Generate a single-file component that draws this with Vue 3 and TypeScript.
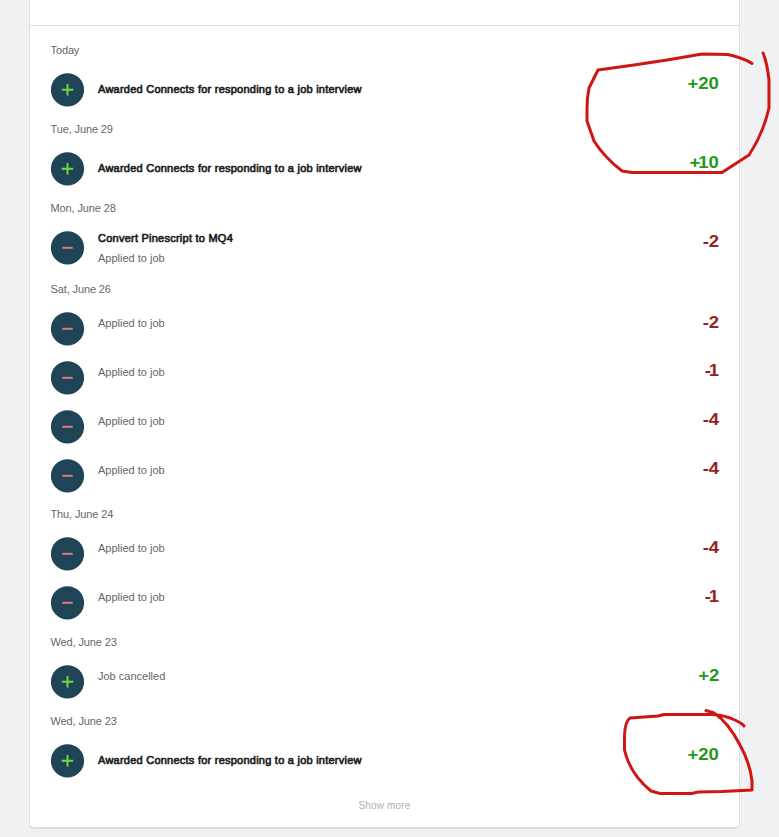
<script setup lang="ts">
interface Entry {
  title?: string
  note?: string
  amount: number
}

interface Group {
  date: string
  entries: Entry[]
}

const awarded = 'Awarded Connects for responding to a job interview'
const applied = 'Applied to job'

const groups: Group[] = [
  { date: 'Today', entries: [{ title: awarded, amount: 20 }] },
  { date: 'Tue, June 29', entries: [{ title: awarded, amount: 10 }] },
  { date: 'Mon, June 28', entries: [{ title: 'Convert Pinescript to MQ4', note: applied, amount: -2 }] },
  {
    date: 'Sat, June 26',
    entries: [
      { note: applied, amount: -2 },
      { note: applied, amount: -1 },
      { note: applied, amount: -4 },
      { note: applied, amount: -4 },
    ],
  },
  {
    date: 'Thu, June 24',
    entries: [
      { note: applied, amount: -4 },
      { note: applied, amount: -1 },
    ],
  },
  { date: 'Wed, June 23', entries: [{ note: 'Job cancelled', amount: 2 }] },
  { date: 'Wed, June 23', entries: [{ title: awarded, amount: 20 }] },
]

const signed = (n: number): string => (n > 0 ? `+${n}` : `${n}`)
</script>

<template>
  <main class="page">
    <section class="card">
      <header class="card-head"></header>
      <div class="history">
        <section v-for="(group, g) in groups" :key="g" class="group">
          <h2 class="date">{{ group.date }}</h2>
          <article
            v-for="(entry, e) in group.entries"
            :key="e"
            class="entry"
            :class="{ 'entry-double': entry.title && entry.note }"
          >
            <svg class="badge" viewBox="0 0 34 34" aria-hidden="true">
              <circle cx="16.5" cy="16.8" r="16.6" fill="#1f4456" />
              <path v-if="entry.amount > 0" d="M10.700 16.800H22.300M16.500 11V22.600" stroke="#6fda44" stroke-width="1.900" />
              <path v-else d="M11.300 16.800H21.700" stroke="#d97c7c" stroke-width="2" />
            </svg>
            <div class="text" :class="{ 'text-single': entry.title && !entry.note }">
              <p v-if="entry.title" class="title">{{ entry.title }}</p>
              <p v-if="entry.note" class="note">{{ entry.note }}</p>
            </div>
            <strong
              class="amount"
              :class="[entry.amount > 0 ? 'gain' : 'spend', { narrow: signed(entry.amount).includes('1') }]"
            ><span class="sign">{{ signed(entry.amount).charAt(0) }}</span>{{ Math.abs(entry.amount) }}</strong>
          </article>
        </section>
      </div>
      <footer class="more">Show more</footer>
    </section>

    <svg class="marks" viewBox="0 0 779 837" aria-hidden="true">
      <path d="M752 63.5Q745 58.5 728 54.5L702 54L667 60L634 65L598 70L589 88Q587 98 587 108V121L594 141Q604 157 622 171L632 172.500H722L749 155Q763 134 769 108V80Q767 62 763 53" />
      <path d="M744 726Q743 724 735 720Q724 715 712 714.500H664L658 716L630 718Q625 721 624.500 736V750Q630 774 651 791L660 793.500H692L698 792L722 791.500L752 790V781Q750 763 740 745Q728 722 714 713L706 710.500" />
    </svg>
  </main>
</template>

<style>
body {
  margin: 0;
  background: #eff1f3;
}
</style>

<style scoped>
.page {
  position: relative;
  box-sizing: border-box;
  width: 779px;
  height: 837px;
  padding-left: 29px;
  overflow: hidden;
  background: #eff1f3;
  font-family: "Liberation Sans", Arial, sans-serif;
}

.card {
  box-sizing: border-box;
  display: flex;
  flex-direction: column;
  width: 711px;
  height: 829px;
  background: #fff;
  border: 1px solid #dcdfe0;
  border-top: 0;
  border-bottom-width: 2px;
  border-radius: 0 0 5px 5px;
}

.card-head {
  flex: none;
  height: 25px;
  border-bottom: 1px solid #d6dcdd;
}

.history {
  padding: 17px 20px 0 20.5px;
}

.date {
  height: 30.1px;
  margin: 0;
  color: #666;
  font-size: 11px;
  font-weight: 400;
  line-height: 14px;
  letter-spacing: -0.12px;
}

.entry {
  display: flex;
  align-items: flex-start;
  height: 48.85px;
}

.entry-double {
  height: 50.95px;
}

.badge {
  flex: none;
  width: 34px;
  height: 34px;
}

.text {
  flex: 1;
  padding: 4px 0 0 13.5px;
}

.entry-double .text {
  padding-top: 0;
}

.text-single {
  padding-top: 9.1px;
}

.title,
.note {
  margin: 0;
  font-size: 11px;
  line-height: 14px;
  white-space: nowrap;
}

.title {
  color: #1c1c1c;
  letter-spacing: 0.24px;
  -webkit-text-stroke: 0.65px #1c1c1c;
}

.note {
  color: #666;
}

.title + .note {
  margin-top: 6px;
}

.amount {
  padding-top: 0.6px;
  font-size: 17px;
  line-height: 20px;
  transform: scaleX(1.09);
  transform-origin: right center;
}

.narrow .sign {
  letter-spacing: -2px;
}

.gain {
  color: #219a16;
}

.spend {
  color: #962121;
}

.more {
  margin-top: 5.6px;
  color: #b0b0b0;
  font-size: 10px;
  line-height: 14px;
  letter-spacing: 0.15px;
  text-align: center;
}

.marks {
  position: absolute;
  top: 0;
  left: 0;
  width: 779px;
  height: 837px;
  fill: none;
  stroke: #d01515;
  stroke-width: 3;
  stroke-linecap: round;
  stroke-linejoin: round;
  pointer-events: none;
}
</style>
